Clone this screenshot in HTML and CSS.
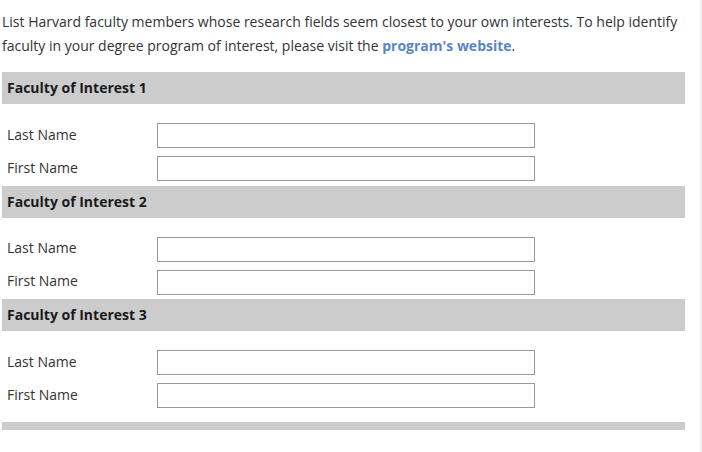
FILE: index.html
```html
<!DOCTYPE html>
<html lang="en">
<head>
<meta charset="utf-8">
<title>Faculty of Interest</title>
<link rel="stylesheet" href="styles.css">
</head>
<body>
<div class="page">
  <p class="intro">List Harvard faculty members whose research fields seem closest to your own interests. To help identify faculty in your degree program of interest, please visit the <a class="link" href="#">program's website</a>.</p>

  <section class="group">
    <h2 class="group-title">Faculty of Interest 1</h2>
    <div class="fields">
      <label class="row"><span class="label">Last Name</span><input class="field" type="text"></label>
      <label class="row"><span class="label">First Name</span><input class="field" type="text"></label>
    </div>
  </section>

  <section class="group">
    <h2 class="group-title">Faculty of Interest 2</h2>
    <div class="fields">
      <label class="row"><span class="label">Last Name</span><input class="field" type="text"></label>
      <label class="row"><span class="label">First Name</span><input class="field" type="text"></label>
    </div>
  </section>

  <section class="group">
    <h2 class="group-title">Faculty of Interest 3</h2>
    <div class="fields">
      <label class="row"><span class="label">Last Name</span><input class="field" type="text"></label>
      <label class="row"><span class="label">First Name</span><input class="field" type="text"></label>
    </div>
  </section>

  <div class="group-end"></div>
</div>
</body>
</html>
```

FILE: styles.css
```css
html {
  background: #f0f0f0;
}
body {
  margin: 0;
  width: 700px;
  min-height: 452px;
  background: #ffffff;
  font-family: "Open Sans", "Liberation Sans", sans-serif;
  font-size: 14px;
  color: #333333;
}
.page {
  padding: 10px 0 0 2px;
  width: 683px;
}
.intro {
  margin: 0 0 14px 0;
  line-height: 24px;
}
.link {
  color: #5b85c6;
  font-weight: bold;
  text-decoration: none;
}
.group-title {
  margin: 0;
  height: 32px;
  line-height: 32px;
  padding-left: 5px;
  background: #cccccc;
  font-size: 14px;
  font-weight: bold;
  color: #1a1a1a;
}
.fields {
  display: flex;
  flex-direction: column;
  gap: 8px;
  padding: 19px 0 4.5px 5px;
}
.row {
  display: flex;
  align-items: center;
}
.label {
  width: 150px;
  line-height: 20px;
  padding-bottom: 2px;
}
.field {
  box-sizing: border-box;
  margin: 0;
  width: 378px;
  height: 25px;
  border: 1px solid #999999;
  border-radius: 0;
  background: #ffffff;
  padding: 0 4px;
  font-family: inherit;
  font-size: 14px;
}
.group:last-of-type .fields {
  padding-bottom: 14px;
}
.group-end {
  height: 8px;
  background: #cccccc;
}
```
